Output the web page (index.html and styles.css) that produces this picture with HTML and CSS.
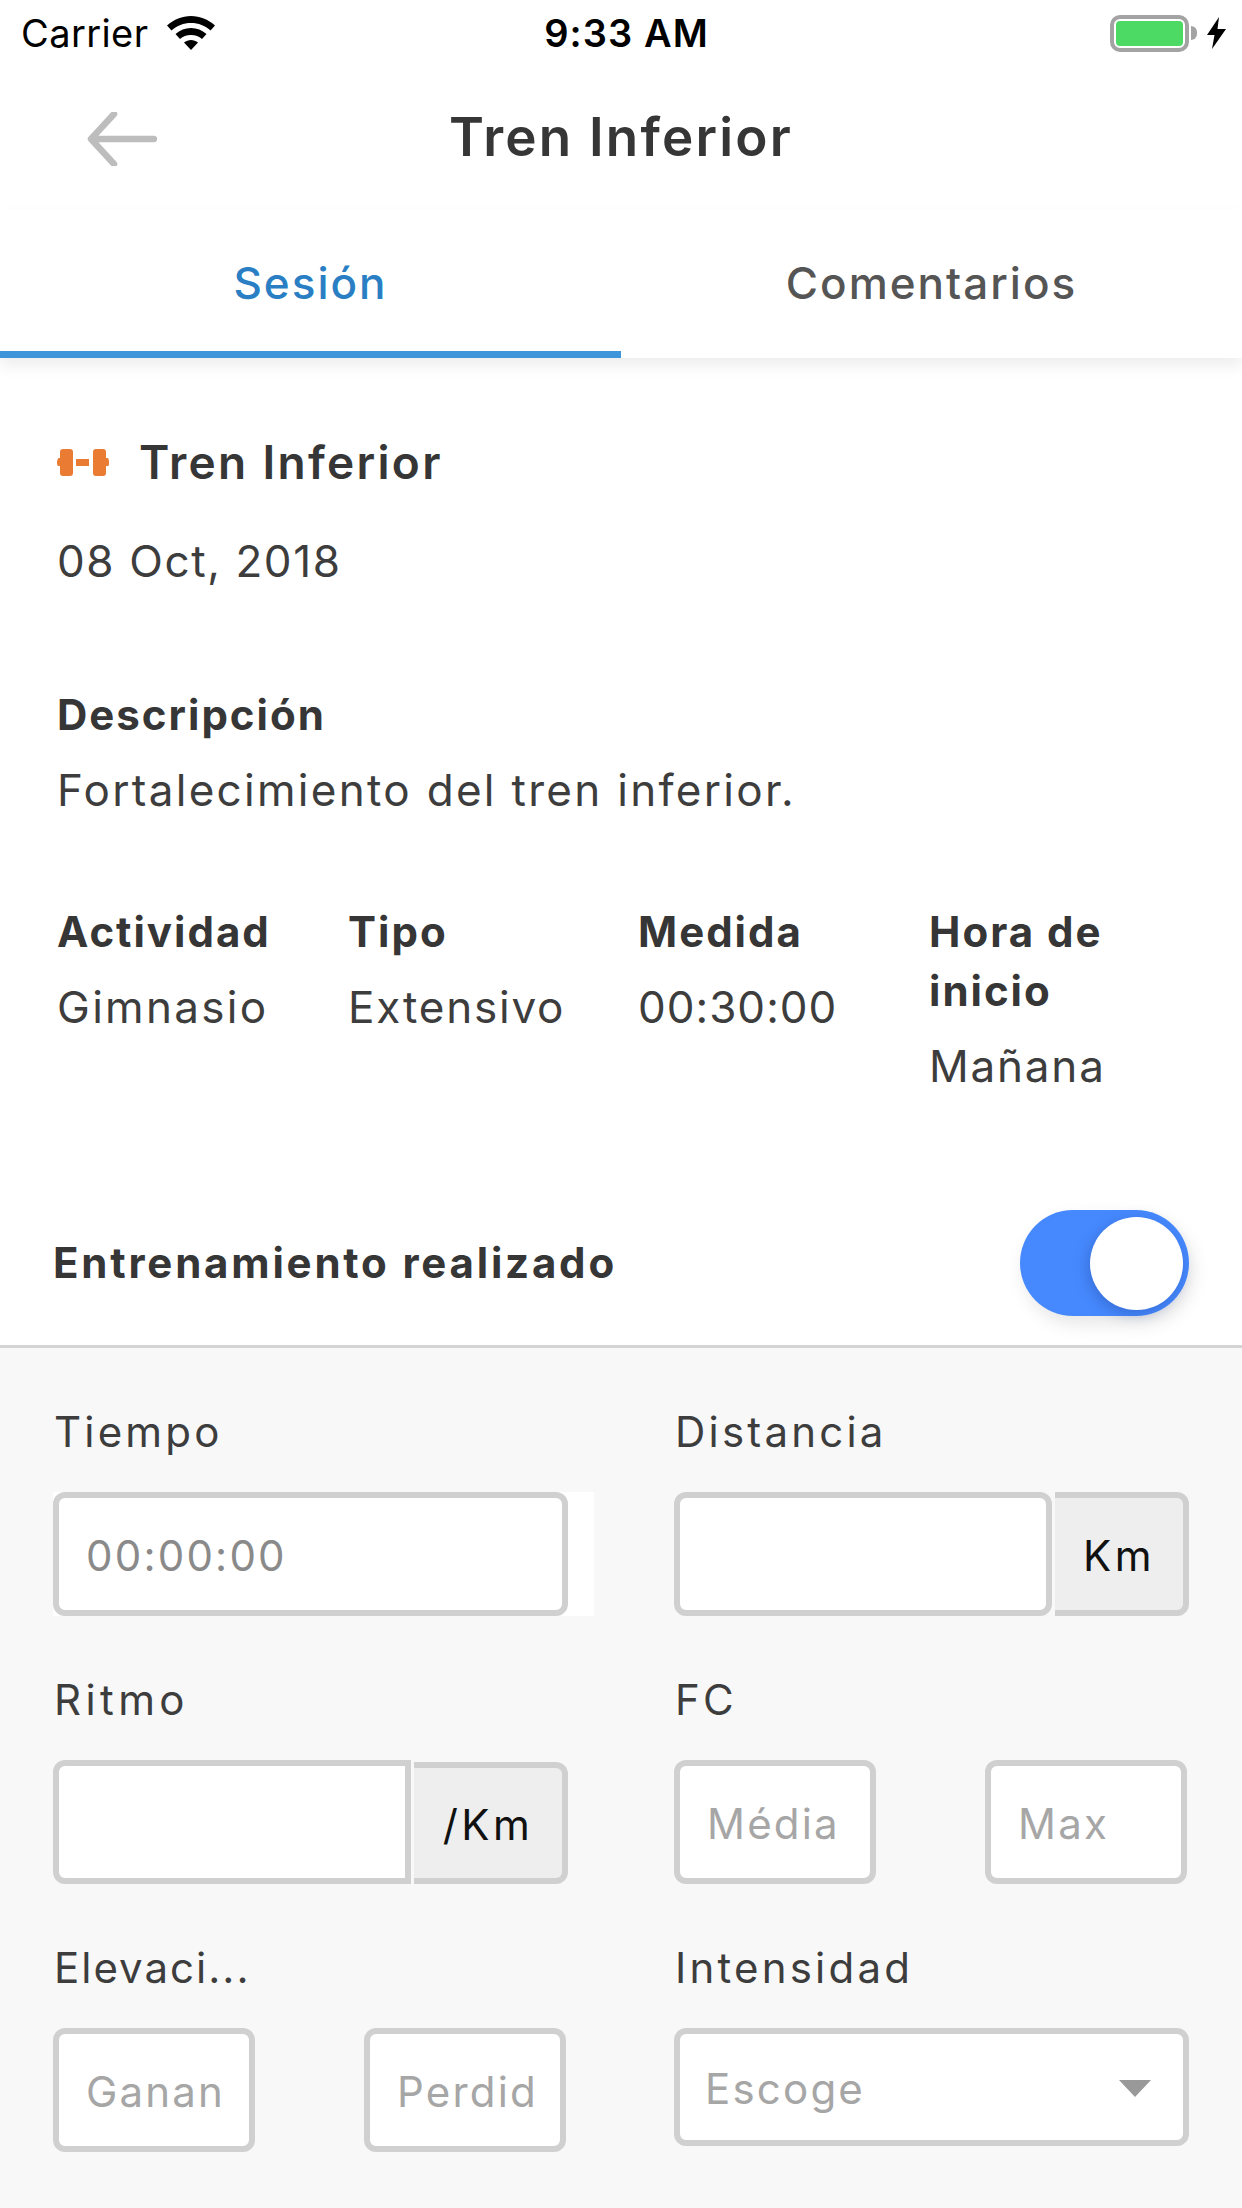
FILE: index.html
```html
<!DOCTYPE html>
<html lang="es">
<head>
<meta charset="utf-8">
<title>Tren Inferior</title>
<link rel="stylesheet" href="styles.css">
</head>
<body>
<div class="screen">
  <header class="status">
    <div class="status-left">
      <span class="carrier">Carrier</span>
      <svg class="wifi" width="48" height="34" viewBox="0 0 48 34"><path d="M24 0C15 0 7 3.500 0 9.500L4.500 14.500C10 9.500 16.500 7 24 7S38 9.500 43.500 14.500L48 9.500C41 3.500 33 0 24 0Z"/><path d="M24 12C18 12 13 14 8.500 18L13 23C16 20.500 19.500 19 24 19S32 20.500 35 23L39.500 18C35 14 30 12 24 12Z"/><path d="M24 24C21.500 24 19 25 17 26.500L24 34L31 26.500C29 25 26.500 24 24 24Z"/></svg>
    </div>
    <span class="time">9:33 AM</span>
    <div class="status-right">
      <div class="battery"><div class="battery-fill"></div></div>
      <div class="battery-nub"></div>
      <svg class="bolt" width="19" height="32" viewBox="0 0 19 32"><path d="M12 0L0 18H7.500L5 32L19 12H10.500Z"/></svg>
    </div>
  </header>

  <nav class="nav">
    <svg class="back" width="70" height="54" viewBox="0 0 70 54"><path d="M67 27H5M27 2L4 27L27 52" fill="none" stroke="#bdbdbd" stroke-width="6.500" stroke-linecap="round" stroke-linejoin="round"/></svg>
    <h1 class="nav-title">Tren Inferior</h1>
  </nav>

  <div class="tabs">
    <div class="tab tab-active">Sesión</div>
    <div class="tab">Comentarios</div>
  </div>

  <main class="session">
    <div class="session-head">
      <svg class="dumbbell" width="52" height="27" viewBox="0 0 52 27"><path fill="#e97b32" d="M6 0H13Q16 0 16 3V24Q16 27 13 27H6Q3 27 3 24V17H1.500Q0 17 0 13.500T1.500 9H3V3Q3 0 6 0ZM19 10H32V17H19ZM39 0H46Q49 0 49 3V9H50.500Q52 9 52 13.500T50.500 17H49V24Q49 27 46 27H39Q36 27 36 24V3Q36 0 39 0Z"/></svg>
      <h2 class="session-title">Tren Inferior</h2>
    </div>
    <p class="date">08 Oct, 2018</p>

    <h3 class="heading desc-heading">Descripción</h3>
    <p class="body-text">Fortalecimiento del tren inferior.</p>

    <div class="facts">
      <div><h3 class="heading">Actividad</h3><p class="body-text">Gimnasio</p></div>
      <div><h3 class="heading">Tipo</h3><p class="body-text body-short">Extensivo</p></div>
      <div><h3 class="heading">Medida</h3><p class="body-text body-num">00:30:00</p></div>
      <div><h3 class="heading">Hora de inicio</h3><p class="body-text body-short">Mañana</p></div>
    </div>
  </main>

  <div class="done-row">
    <span class="done-label">Entrenamiento realizado</span>
    <div class="toggle"><div class="knob"></div></div>
  </div>

  <section class="form">
    <div class="field">
      <label class="label">Tiempo</label>
      <div class="control-wrap">
        <div class="box full"><span class="ph ph-dark">00:00:00</span></div>
      </div>
    </div>
    <div class="field">
      <label class="label">Distancia</label>
      <div class="group">
        <div class="box grow"></div>
        <div class="addon addon-km">Km</div>
      </div>
    </div>

    <div class="field">
      <label class="label label-wide">Ritmo</label>
      <div class="group">
        <div class="box grow square-right"></div>
        <div class="addon addon-pace">/Km</div>
      </div>
    </div>
    <div class="field">
      <label class="label">FC</label>
      <div class="pair">
        <div class="box"><span class="ph">Média</span></div>
        <div class="box"><span class="ph">Max</span></div>
      </div>
    </div>

    <div class="field">
      <label class="label label-tight">Elevaci...</label>
      <div class="pair">
        <div class="box"><span class="ph">Ganancia</span></div>
        <div class="box"><span class="ph">Perdida</span></div>
      </div>
    </div>
    <div class="field">
      <label class="label">Intensidad</label>
      <div class="box select">
        <span class="ph ph-select">Escoge</span>
        <div class="caret"></div>
      </div>
    </div>
  </section>
</div>
</body>
</html>
```

FILE: styles.css
```css
* { box-sizing: border-box; margin: 0; padding: 0; }
html, body { width: 1242px; height: 2208px; overflow: hidden; background: #fff; }
body { font-family: Inter, "Noto Sans", sans-serif; color: #363636; }
.screen { width: 1242px; height: 2208px; display: flex; flex-direction: column; overflow: hidden; }

.status { height: 66px; display: grid; grid-template-columns: 1fr auto 1fr; align-items: center; padding: 0 16px 0 21px; color: #000; flex: none; }
.status-left { display: flex; align-items: center; gap: 19px; }
.carrier { font-size: 38px; letter-spacing: 0.4px; }
.wifi { fill: #000; margin-top: -1px; }
.time { font-size: 38px; font-weight: 600; letter-spacing: 1.1px; margin-left: 6px; }
.status-right { display: flex; align-items: center; justify-content: flex-end; }
.battery { width: 79px; height: 37px; border: 4px solid #a3a3a3; border-radius: 10px; padding: 2px; background: #fff; }
.battery-fill { width: 100%; height: 100%; background: #4cd964; border-radius: 4px; }
.battery-nub { width: 6px; height: 14px; margin-left: 2px; background: #a3a3a3; border-radius: 0 7px 7px 0; }
.bolt { fill: #000; margin-left: 10px; }

.nav { height: 143px; position: relative; display: flex; justify-content: center; padding-top: 38px; flex: none; }
.back { position: absolute; left: 87px; top: 46px; }
.nav-title { font-size: 53px; line-height: 66px; font-weight: 600; color: #363636; letter-spacing: 2.2px; }

.tabs { height: 149px; display: grid; grid-template-columns: 1fr 1fr; flex: none; box-shadow: 0 8px 14px rgba(0,0,0,0.07); position: relative; }
.tab { font-size: 44px; font-weight: 500; line-height: 56px; padding-top: 46px; text-align: center; color: #555; letter-spacing: 2px; }
.tab-active { color: #2a7fc4; border-bottom: 7px solid #3f95d9; }

.session { padding: 0 57px; flex: none; }
.session-head { display: flex; align-items: center; gap: 30px; margin-top: 76px; height: 56px; }
.dumbbell { flex: none; }
.session-title { font-size: 46px; line-height: 56px; font-weight: 600; color: #363636; letter-spacing: 2.3px; }
.date { font-size: 44px; line-height: 56px; margin-top: 43px; color: #3d3d3d; letter-spacing: 1.6px; }
.heading { font-size: 42px; line-height: 59px; font-weight: 700; color: #363636; letter-spacing: 2px; }
.desc-heading { margin-top: 96px; }
.body-text { font-size: 44px; line-height: 59px; margin-top: 17px; color: #3d3d3d; letter-spacing: 2.3px; }
.body-short { letter-spacing: 1.8px; }
.body-num { letter-spacing: 1px; }
.facts { display: grid; grid-template-columns: 291px 290px 291px 1fr; margin-top: 82px; }

.done-row { position: absolute; top: 1211px; left: 0; right: 0; height: 137px; padding: 0 53px 31px 53px; display: flex; justify-content: space-between; align-items: center; border-bottom: 3px solid #d4d4d4; }
.done-label { font-size: 42px; font-weight: 700; color: #363636; letter-spacing: 2.8px; }
.toggle { width: 169px; height: 106px; border-radius: 53px; background: #4689fe; position: relative; box-shadow: 4px 8px 18px rgba(0,0,0,0.10); }
.knob { position: absolute; right: 6px; top: 7px; width: 93px; height: 93px; border-radius: 50%; background: #fff; box-shadow: -2px 4px 14px rgba(30,60,140,0.35); }

.form { position: absolute; top: 1348px; left: 0; right: 0; bottom: 0; background: #f8f8f8; padding: 54px 53px 0; display: grid; grid-template-columns: 515px 515px; column-gap: 106px; grid-auto-rows: 214px; row-gap: 54px; align-content: start; }
.field { min-width: 0; }
.label { display: block; height: 60px; margin-bottom: 30px; font-size: 42px; line-height: 60px; color: #3d3d3d; padding-left: 1px; letter-spacing: 3.2px; }
.label-tight { letter-spacing: 2px; }
.label-wide { letter-spacing: 4.4px; }
.control-wrap { background: #fff; width: 541px; height: 124px; }
.box { height: 124px; width: 202px; background: #fff; border: 6px solid #d0d0d0; border-radius: 12px; display: flex; align-items: center; padding: 3px 27px 0 27px; overflow: hidden; }
.box.full { width: 515px; }
.ph { display: block; overflow: hidden; white-space: nowrap; font-size: 42px; line-height: 60px; color: #a6a6a6; letter-spacing: 2.2px; }
.ph-dark { color: #8a8a8a; }
.group { display: flex; gap: 3px; height: 124px; }
.grow { flex: 1; width: auto; }
.square-right { border-radius: 12px 0 0 12px; }
.addon { background: #eee; border: 6px solid #d0d0d0; border-left: 0; border-radius: 0 12px 12px 0; display: flex; align-items: center; justify-content: center; padding-top: 3px; font-size: 42px; color: #111; flex: none; margin-top: 2px; height: 122px; letter-spacing: 3.5px; }
.addon-km { width: 134px; margin-top: 0; height: 124px; }
.addon-pace { width: 154px; }
.pair { display: flex; justify-content: space-between; width: 513px; }
.select { width: 515px; height: 118px; padding: 3px 32px 0 25px; justify-content: space-between; }
.caret { width: 0; height: 0; border-left: 16px solid transparent; border-right: 16px solid transparent; border-top: 17px solid #999; }
```
